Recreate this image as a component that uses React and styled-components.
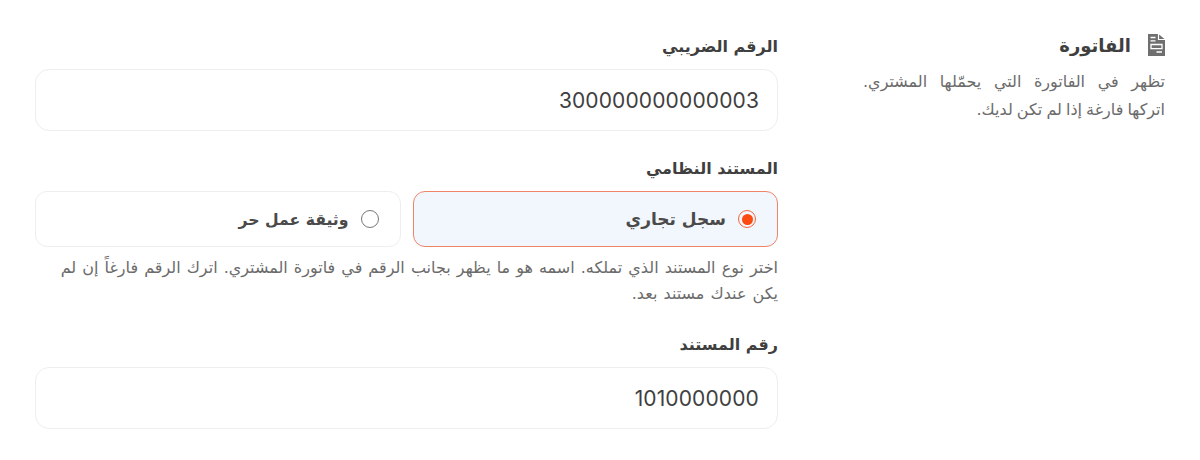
import React from "react";
import styled, { createGlobalStyle } from "styled-components";

const Global = createGlobalStyle`
  html, body { margin: 0; padding: 0; background: #fff; }
  body { font-family: "DejaVu Sans", sans-serif; }
`;

const Page = styled.div`
  width: 1200px;
  height: 460px;
  box-sizing: border-box;
  padding: 30px 35px 0 35px;
  direction: rtl;
  display: grid;
  grid-template-columns: 310px 743px;
  column-gap: 77px;
  justify-content: start;
  overflow: hidden;
`;

const Aside = styled.aside`
  display: flex;
  flex-direction: column;
`;

const AsideTitle = styled.h2`
  margin: 0;
  display: flex;
  align-items: center;
  gap: 17px;
  height: 30px;
  font-size: 18px;
  font-weight: 700;
  color: #3f3f3f;
`;

const AsideText = styled.div`
  margin-top: 8px;
  display: flex;
  flex-direction: column;
`;

const AsideLine = styled.span`
  font-size: 16px;
  word-spacing: ${(p) => p.$spread}px;
  line-height: 28px;
  color: #6b6b6b;
`;

const Form = styled.div`
  display: flex;
  flex-direction: column;
`;

const Field = styled.div`
  display: flex;
  flex-direction: column;
  margin-bottom: ${(p) => p.$gap || 0}px;
`;

const Label = styled.label`
  display: block;
  height: 24px;
  margin-bottom: 15px;
  font-size: 16px;
  line-height: 34px;
  font-weight: 700;
  color: #3f3f3f;
`;

const Input = styled.div`
  height: 62px;
  box-sizing: border-box;
  border: 1px solid #eeeeee;
  border-radius: 14px;
  display: flex;
  align-items: center;
  padding: 0 18px;
  direction: ltr;
  justify-content: flex-end;
  font-family: "Inter", sans-serif;
  font-size: 21px;
  letter-spacing: 0.13px;
  color: #3f3f3f;
`;

const Options = styled.div`
  display: grid;
  grid-template-columns: 1fr 1fr;
  gap: 12px;
`;

const Option = styled.div`
  height: 56px;
  box-sizing: border-box;
  border-radius: 12px;
  border: 1px solid ${(p) => (p.$on ? "#ef8468" : "#eeeeee")};
  background: ${(p) => (p.$on ? "#f2f7fd" : "#fff")};
  display: flex;
  align-items: center;
  padding: 0 21px;
  gap: 12px;
  font-size: ${(p) => (p.$on ? 17 : 15.7)}px;
  font-weight: 700;
  color: #4a4a4a;
`;

const Radio = styled.span`
  width: 18px;
  height: 18px;
  box-sizing: border-box;
  border-radius: 50%;
  flex: none;
  border: 1.5px solid ${(p) => (p.$on ? "#f4643a" : "#777")};
  display: flex;
  align-items: center;
  justify-content: center;
  &::after {
    content: "";
    width: 11px;
    height: 11px;
    border-radius: 50%;
    background: ${(p) => (p.$on ? "#fb4a12" : "transparent")};
  }
`;

const Help = styled.p`
  margin: 8px 0 0;
  font-size: 16px;
  word-spacing: 1px;
  line-height: 26px;
  color: #6b6b6b;
`;

const DocIcon = () => (
  <svg width="17" height="22" viewBox="0 0 17 22">
    <path d="M0 0h10.5L17 5.5V22H0z" fill="#6f6f6f" />
    <path d="M10.5 0v5.5H17" fill="none" stroke="#fff" strokeWidth="1.2" />
    <path d="M2.5 3.5h5M2.5 6.8h5M3 10.5h11v4.2H3zM8.5 18h5.5" stroke="#fff" strokeWidth="1.3" fill="none" />
  </svg>
);

export default function App() {
  return (
    <>
      <Global />
      <Page>
        <Aside>
          <AsideTitle>
            <DocIcon />
            الفاتورة
          </AsideTitle>
          <AsideText>
            <AsideLine $spread={7.5}>تظهر في الفاتورة التي يحمّلها المشتري.</AsideLine>
            <AsideLine $spread={-1}>اتركها فارغة إذا لم تكن لديك.</AsideLine>
          </AsideText>
        </Aside>
        <Form>
          <Field $gap={21}>
            <Label>الرقم الضريبي</Label>
            <Input>300000000000003</Input>
          </Field>
          <Field $gap={21}>
            <Label>المستند النظامي</Label>
            <Options>
              <Option $on>
                <Radio $on />
                سجل تجاري
              </Option>
              <Option>
                <Radio />
                وثيقة عمل حر
              </Option>
            </Options>
            <Help>
              اختر نوع المستند الذي تملكه. اسمه هو ما يظهر بجانب الرقم في فاتورة المشتري. اترك الرقم فارغاً إن لم يكن عندك مستند بعد.
            </Help>
          </Field>
          <Field>
            <Label>رقم المستند</Label>
            <Input>1010000000</Input>
          </Field>
        </Form>
      </Page>
    </>
  );
}
